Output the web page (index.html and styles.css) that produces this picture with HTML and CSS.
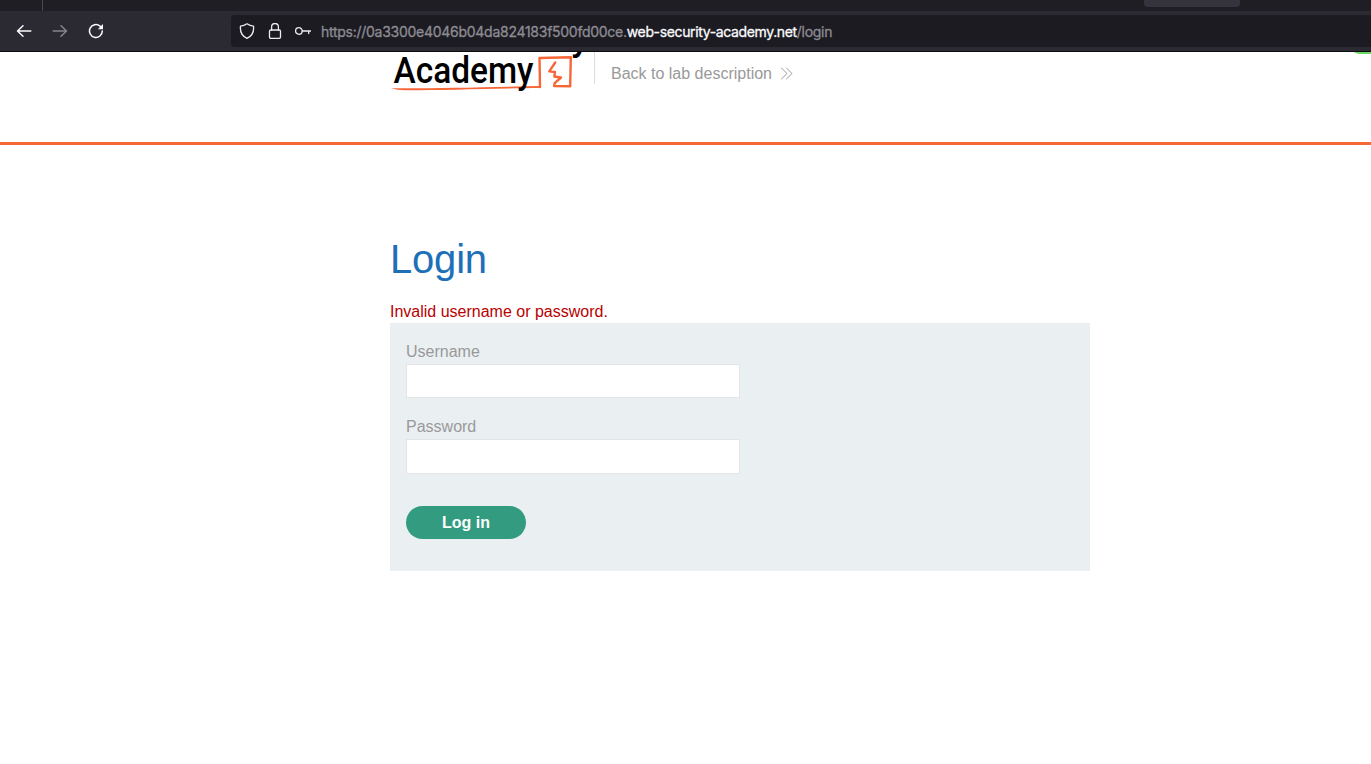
FILE: index.html
```html
<!DOCTYPE html>
<html lang="en">
<head>
<meta charset="utf-8">
<title>Login</title>
<link rel="stylesheet" href="styles.css">
</head>
<body>
<div class="tabstrip"><span class="tab-separator"></span><span class="tab-button"></span></div>
<div class="toolbar">
  <svg class="nav-icon" viewBox="0 0 16 16"><path d="M14.800 8H1.500M7 2.700 1.500 8l5.500 5.300" /></svg>
  <svg class="nav-icon disabled" viewBox="0 0 16 16"><path d="M1.200 8h13.300M9 2.700 14.500 8 9 13.300" /></svg>
  <svg class="nav-icon" viewBox="0 0 16 16"><path d="M14.300 8A6.400 6.400 0 1 1 12 3.100l1 .9" /><path class="solid" d="M15 1v5.200H9.800z" /></svg>
  <div class="urlbar">
    <svg viewBox="0 0 16 16"><path d="M8 .8C6.200 2 3.700 2.900 1.500 3.100C.9 8.200 3 13 8 15.400C13 13 15.100 8.200 14.500 3.100C12.300 2.900 9.800 2 8 .8z" /></svg>
    <svg viewBox="0 0 16 16"><rect x="2.500" y="7" width="11" height="8.300" rx="1.300" /><path d="M4.600 7V3.900a3.400 3.400 0 0 1 6.800 0V7" /></svg>
    <svg viewBox="0 0 16 16"><circle cx="3.900" cy="8" r="3.300" /><path d="M7.300 8h8.400M13.700 8v2.500" /></svg>
    <div class="url"><span class="url-prefix">https://0a3300e4046b04da824183f500fd00ce.</span><span class="url-domain">web-security-academy.net</span><span class="url-path">/login</span></div>
  </div>
</div>
<header class="lab-header">
  <div class="container header-row">
    <svg class="logo" viewBox="390 52 204 42">
      <path class="logo-line" d="M391 88.200C430 88.600 485 87.200 540 86L540 88C500 88.300 440 90.300 405 90.200C400 90 395 89.500 391 88.200z" />
      <path class="logo-box" d="M540 87 539.500 58 570.800 57.300 570.200 86.300 554.200 86 554.700 83.200 561 77.500 554.300 76.500 555 72 549.300 71.300 555.200 62.500" />
      <text class="logo-text" x="571" y="50">y</text>
      <text class="logo-text" x="393.500" y="83" textLength="140" lengthAdjust="spacingAndGlyphs">Academy</text>
    </svg>
    <a class="back-link">Back to lab description<svg viewBox="0 0 14 14"><path d="M1.500 1 7 6.500 1.500 12M6.500 1 12 6.500 6.500 12" /></svg></a>
  </div>
  <span class="status-badge"></span>
</header>
<main class="container">
  <h1>Login</h1>
  <p class="warning">Invalid username or password.</p>
  <form class="login-form">
    <label for="username">Username</label>
    <input id="username" type="text">
    <label for="password">Password</label>
    <input id="password" class="password" type="password">
    <button type="button">Log in</button>
  </form>
</main>
</body>
</html>
```
FILE: styles.css
```css
* { box-sizing: border-box; }
html { overflow: hidden; }
body { margin: 0; background: #fff; font: 16px/20px "Liberation Sans", Arial, sans-serif; overflow: hidden; }
svg { display: block; fill: none; stroke-linecap: round; stroke-linejoin: round; }
.tabstrip { display: flex; height: 11px; background: #1f1e25; padding-left: 42px; }
.tab-separator { width: 1px; background: #49484f; }
.tab-button { width: 96px; height: 7px; margin-left: 1101px; background: #35333e; border-radius: 0 0 4px 4px; }
.toolbar { display: flex; align-items: center; gap: 20px; height: 41px; padding-left: 16px; background: #2b2a33; border-bottom: 1px solid #0c0c0d; }
.nav-icon { width: 16px; height: 16px; stroke: #fbfbfe; stroke-width: 1.5; }
.nav-icon.disabled { stroke: #85848b; }
.nav-icon .solid { fill: #fbfbfe; stroke: none; }
.urlbar { display: flex; align-items: center; flex: 1; gap: 12px; height: 32px; margin-left: 107px; padding-left: 8px; background: #1c1b22; border-radius: 4px 0 0 4px; }
.urlbar svg { width: 16px; height: 16px; stroke: #ececf0; stroke-width: 1.3; flex: none; }
.url { margin-left: -2px; font-family: Inter, sans-serif; font-size: 14px; line-height: 20px; white-space: nowrap; color: #8d8c93; padding-top: 1px; letter-spacing: -.27px; -webkit-text-stroke: .3px; }
.url-domain { color: #fbfbfe; letter-spacing: -.36px; }
.container { width: 700px; margin-left: 390px; }
.lab-header { position: relative; height: 93px; border-bottom: 3px solid #f76637; }
.header-row { display: flex; align-items: flex-start; }
.logo { width: 204px; height: 42px; overflow: hidden; }
.logo-line { fill: #f76637; }
.logo-box { stroke: #f76637; stroke-width: 2.4; }
.logo-text { fill: #000; font: 500 37px Roboto, sans-serif; }
.back-link { display: flex; align-items: center; height: 32px; padding: 11px 0 0 16px; border-left: 1px solid #ddd; color: #999; }
.back-link svg { width: 14px; height: 14px; margin-left: 8px; stroke: #999; stroke-width: 1; }
.status-badge { position: absolute; right: -16px; top: -18px; width: 37px; height: 20px; border-radius: 20px; background: #6bd765; clip-path: inset(18px 0 0 0); }
h1 { margin: 91px 0 0; font-size: 40px; line-height: 46px; letter-spacing: -.2px; font-weight: 400; color: #1d70b8; }
.warning { margin: 20px 0 1px; color: #b90000; }
.login-form { display: flex; flex-direction: column; align-items: flex-start; height: 248px; padding: 19px 16px; background: #eaeff2; }
label { color: #999; line-height: 20px; margin-bottom: 2px; }
input { width: 334px; height: 34px; margin: 0 0 19px; padding: 0 8px; border: 1px solid #e2e4e5; background: #fff; font: inherit; }
input.password { height: 35px; margin-bottom: 32px; }
button { width: 120px; height: 33px; border: 0; border-radius: 17px; padding: 0; background: #339b80; color: #fff; font: bold 16px "Liberation Sans", Arial, sans-serif; }
```
